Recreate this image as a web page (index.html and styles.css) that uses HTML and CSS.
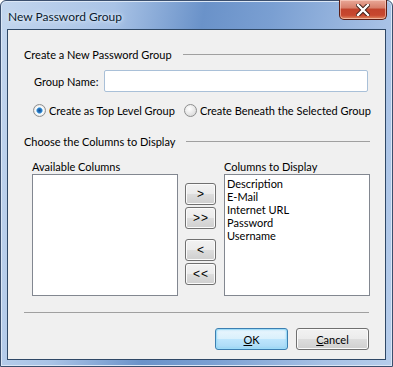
FILE: index.html
```html
<!DOCTYPE html>
<html lang="en">
<head>
    <meta charset="UTF-8">
    <meta name="viewport" content="width=device-width, initial-scale=1.0">
    <title>New Password Group</title>
    <link rel="stylesheet" href="styles.css">
</head>
<body>
    <div class="window">
        <div class="title-bar">
            <span class="title">New Password Group</span>
            <button class="close-btn" title="Close">
                <svg width="14" height="12" viewBox="0 0 14 12">
                    <path d="M2 1 L12 11 M12 1 L2 11" stroke="#3a1a14" stroke-width="4.2" stroke-linecap="square"/>
                    <path d="M2 1 L12 11 M12 1 L2 11" stroke="#fff" stroke-width="2.4" stroke-linecap="square"/>
                </svg>
            </button>
        </div>

        <div class="client">
            <div class="group-header">
                <span>Create a New Password Group</span>
                <div class="rule"></div>
            </div>

            <div class="name-row">
                <label for="group-name">Group Name:</label>
                <input type="text" id="group-name">
            </div>

            <div class="radio-row">
                <label class="radio"><input type="radio" name="level" checked>Create as Top Level Group</label>
                <label class="radio"><input type="radio" name="level">Create Beneath the Selected Group</label>
            </div>

            <div class="group-header second">
                <span>Choose the Columns to Display</span>
                <div class="rule"></div>
            </div>

            <div class="columns">
                <div class="col">
                    <div class="col-label">Available Columns</div>
                    <div class="listbox"></div>
                </div>
                <div class="move-buttons">
                    <button class="btn small">&gt;</button>
                    <button class="btn small">&gt;&gt;</button>
                    <button class="btn small spaced">&lt;</button>
                    <button class="btn small">&lt;&lt;</button>
                </div>
                <div class="col">
                    <div class="col-label">Columns to Display</div>
                    <div class="listbox">
                        <div class="item">Description</div>
                        <div class="item">E-Mail</div>
                        <div class="item">Internet URL</div>
                        <div class="item">Password</div>
                        <div class="item">Username</div>
                    </div>
                </div>
            </div>

            <div class="separator"></div>

            <div class="dialog-buttons">
                <button class="btn wide default"><u>O</u>K</button>
                <button class="btn wide"><u>C</u>ancel</button>
            </div>
        </div>
    </div>
</body>
</html>
```

FILE: styles.css
```css
body {
    margin: 0;
    padding: 0;
    background-color: #fff;
    font-family: Lato, "Open Sans", sans-serif;
    font-size: 11px;
    line-height: 15px;
    color: #000;
}

.window {
    width: 393px;
    height: 367px;
    box-sizing: border-box;
    border: 1px solid #3b4f6e;
    border-radius: 6px 6px 0 0;
    padding: 0 6px 6px 6px;
    display: flex;
    flex-direction: column;
    background: linear-gradient(100deg, #c3d6ee 0%, #a9c3e6 25%, #6a92c9 45%, #7a9fd2 60%, #a7c1e5 85%, #b6cdeb 100%);
    box-shadow: inset 0 0 0 1px #dbe7f6;
}

.title-bar {
    height: 28px;
    flex-shrink: 0;
    display: flex;
    justify-content: space-between;
    align-items: flex-start;
    margin-right: -1px;
}

.title {
    margin-top: 8px;
    margin-left: 1px;
    font-size: 12px;
    color: #0b1b2e;
    text-shadow: 0 0 6px #e6f0fb, 0 0 3px #e6f0fb;
}

.close-btn {
    width: 48px;
    height: 20px;
    margin-top: -1px;
    padding: 0;
    border: 1px solid #5a1e16;
    border-top: none;
    border-radius: 0 0 5px 5px;
    background: linear-gradient(#e9a898 0%, #d8806c 40%, #c2432c 50%, #c7472f 80%, #e08a62 100%);
    box-shadow: inset 0 0 0 1px rgba(255, 220, 210, 0.55);
    display: flex;
    align-items: center;
    justify-content: center;
}

.client {
    flex: 1;
    border: 1px solid #2f4866;
    background-color: #f0f0f0;
    padding: 17px 15px 0 16px;
    display: flex;
    flex-direction: column;
}

.group-header {
    display: flex;
    align-items: center;
    height: 15px;
    white-space: nowrap;
}

.group-header.second {
    margin-top: 16px;
}

.rule {
    flex: 1;
    height: 1px;
    background-color: #a0a0a0;
    margin-left: 11px;
}

.name-row {
    display: flex;
    align-items: center;
    margin-top: 8px;
    padding-left: 10px;
}

.name-row label {
    width: 70px;
    flex-shrink: 0;
    white-space: nowrap;
}

.name-row input {
    width: 264px;
    height: 22px;
    box-sizing: border-box;
    border: 1px solid #a9c0d8;
    border-radius: 2px;
    background-color: #fff;
    outline: none;
    font: inherit;
}

.radio-row {
    display: flex;
    align-items: center;
    margin-top: 11px;
    padding-left: 9px;
    gap: 9px;
    height: 15px;
    white-space: nowrap;
}

.radio {
    display: flex;
    align-items: center;
}

.radio input {
    appearance: none;
    width: 13px;
    height: 13px;
    margin: 0 3px 0 0;
    border: 1px solid #8e8f8f;
    border-radius: 50%;
    box-sizing: border-box;
    background: radial-gradient(circle at 40% 35%, #ffffff 0%, #e4e4e4 60%, #cfcfcf 100%);
}

.radio input:checked {
    background: radial-gradient(circle at 50% 50%, #174f91 0%, #2a79c4 28%, #7cc1ee 38%, #ffffff 46%, #e1e1e1 75%, #cdcdcd 100%);
}

.columns {
    display: flex;
    margin-top: 10px;
    padding-left: 8px;
}

.col {
    display: flex;
    flex-direction: column;
}

.col-label {
    height: 15px;
    white-space: nowrap;
}

.listbox {
    width: 146px;
    height: 122px;
    box-sizing: border-box;
    border: 1px solid #828790;
    background-color: #fff;
    padding: 2px 2px;
}

.item {
    line-height: 13px;
}

.move-buttons {
    display: flex;
    flex-direction: column;
    margin: 24px 8px 0 7px;
    gap: 2px;
}

.btn {
    font: inherit;
    color: #000;
    border: 1px solid #707070;
    border-radius: 3px;
    background: linear-gradient(#f2f2f2 0%, #ebebeb 50%, #dddddd 50%, #cfcfcf 100%);
    box-shadow: inset 0 0 0 1px #fbfbfb;
    padding: 0;
    cursor: pointer;
}

.btn.small {
    width: 31px;
    height: 22px;
    font-family: "Liberation Sans", sans-serif;
    font-size: 12px;
    letter-spacing: 1px;
    text-indent: 1px;
}

.btn.spaced {
    margin-top: 8px;
}

.separator {
    height: 1px;
    background-color: #a0a0a0;
    margin-top: 16px;
    margin-right: 1px;
}

.dialog-buttons {
    display: flex;
    justify-content: flex-end;
    gap: 8px;
    margin-top: 15px;
    margin-right: 1px;
}

.btn.wide {
    width: 73px;
    height: 22px;
}

.btn.default {
    border-color: #3c7fb1;
    background: linear-gradient(#eaf6fd 0%, #d9f0fc 50%, #bee6fd 50%, #a7d9f5 100%);
    box-shadow: inset 0 0 0 1px #9edcf8, inset 0 0 3px #6fc6ef;
}
```
